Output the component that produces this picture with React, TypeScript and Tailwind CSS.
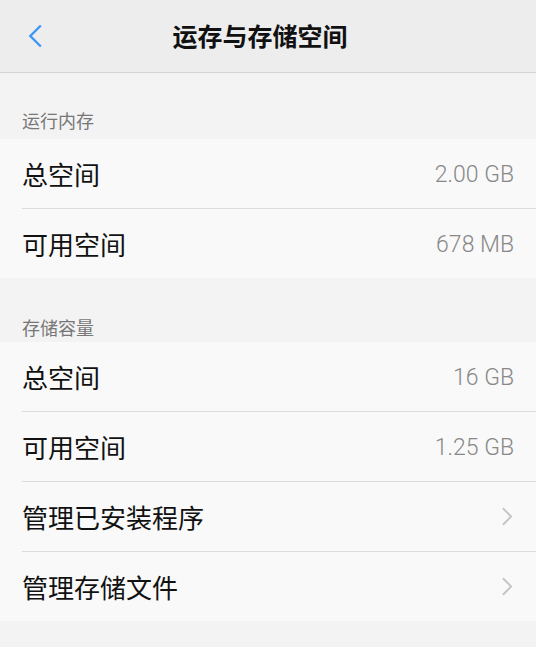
import { Fragment } from "react";

type Row = { label: string; value?: string; link?: boolean };

const sections: { title: string; rows: Row[] }[] = [
  {
    title: "运行内存",
    rows: [
      { label: "总空间", value: "2.00 GB" },
      { label: "可用空间", value: "678 MB" },
    ],
  },
  {
    title: "存储容量",
    rows: [
      { label: "总空间", value: "16 GB" },
      { label: "可用空间", value: "1.25 GB" },
      { label: "管理已安装程序", link: true },
      { label: "管理存储文件", link: true },
    ],
  },
];

const font = { fontFamily: '"Noto Sans CJK SC", "Noto Sans", sans-serif' };

function Chevron({ className }: { className?: string }) {
  return (
    <svg viewBox="0 0 12 20" className={className} fill="none" stroke="currentColor" strokeWidth="2">
      <path d="M11 1 L2 10 L11 19" />
    </svg>
  );
}

export default function App() {
  return (
    <div className="min-h-[647px] w-[536px] bg-[#f3f3f3]" style={font}>
      <header className="flex h-[73px] items-center border-b border-[#d4d4d4] bg-[#ededed] pl-[28px]">
        <Chevron className="h-[28px] w-[14px] text-[#3a95f5]" />
        <h1 className="flex-1 pr-[58px] text-center text-[25px] font-bold text-[#111]">运存与存储空间</h1>
      </header>

      {sections.map((section, i) => (
        <section key={section.title} className={i === 0 ? "pt-[30px]" : "pt-[34px]"}>
          <p
            className={
              i === 0
                ? "px-[22px] pb-[2px] text-[18px] leading-[34px] text-[#777]"
                : "px-[22px] text-[18px] leading-[30px] text-[#777]"
            }
          >
            {section.title}
          </p>
          <div className="bg-[#f9f9f9]">
            {section.rows.map((row, j) => (
              <Fragment key={row.label}>
                {j > 0 && <div className="ml-[22px] h-px bg-[#dcdcdc]" />}
                <div className="flex h-[69px] items-center justify-between px-[22px]">
                  <span className="text-[26px] leading-none text-[#111]">{row.label}</span>
                  {row.link ? (
                    <Chevron className="mr-[1px] h-[19px] w-[11px] rotate-180 text-[#c4c4c4]" />
                  ) : (
                    <span
                      className="pt-[2px] text-[23px] leading-none font-light text-[#888]"
                      style={{ fontFamily: "Roboto, sans-serif" }}
                    >
                      {row.value}
                    </span>
                  )}
                </div>
              </Fragment>
            ))}
          </div>
        </section>
      ))}
    </div>
  );
}
